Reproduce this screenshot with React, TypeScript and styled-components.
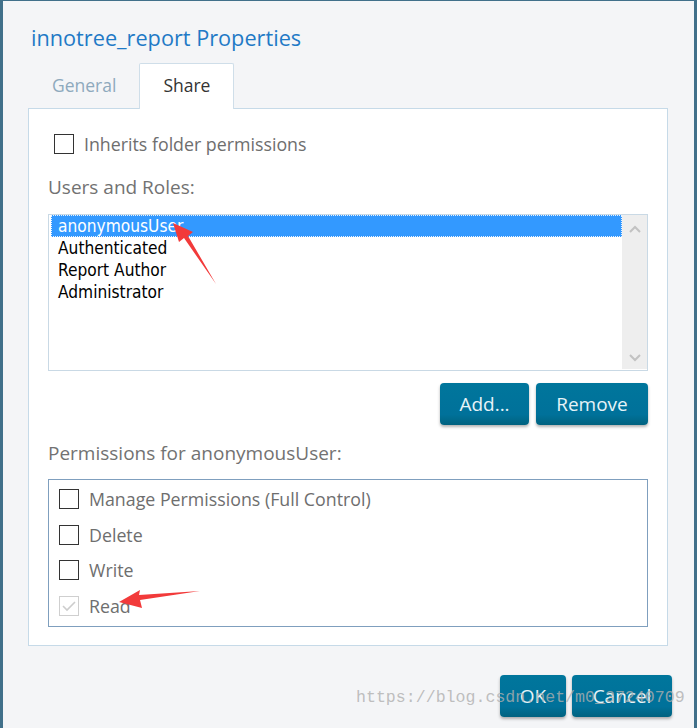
import React from "react";
import styled, { createGlobalStyle } from "styled-components";

const GlobalStyles = createGlobalStyle`
  * {
    box-sizing: border-box;
  }
  html, body {
    margin: 0;
    padding: 0;
    background: #41708a;
    font-family: 'Open Sans', 'Liberation Sans', sans-serif;
  }
`;

const Dialog = styled.div`
  position: relative;
  margin: 1px 3px 0 3px;
  height: 727px;
  background: #f4f5f7;
  padding: 0 26px 0 25px;
  display: flex;
  flex-direction: column;
  overflow: hidden;
`;

const Title = styled.h1`
  margin: 22px 0 0 3px;
  height: 39px;
  font-size: 21.7px;
  font-weight: 400;
  line-height: 29px;
  color: #1f7ac6;
`;

const Tabs = styled.div`
  display: flex;
  align-items: flex-end;
  gap: 2px;
  height: 46px;
  padding-left: 3px;
`;

const Tab = styled.div<{ $active?: boolean }>`
  height: 46px;
  padding: 0 ${(p) => (p.$active ? "23px" : "20px")} 3px;
  display: flex;
  align-items: center;
  font-size: 17.5px;
  color: ${(p) => (p.$active ? "#333" : "#8ea9bd")};
  background: ${(p) => (p.$active ? "#fff" : "transparent")};
  border: 1px solid ${(p) => (p.$active ? "#cfdee9" : "transparent")};
  border-bottom: none;
  border-radius: 2px 2px 0 0;
  margin-bottom: -1px;
  position: relative;
  z-index: 1;
`;

const Panel = styled.div`
  background: #fff;
  border: 1px solid #c6dae8;
  height: 538px;
  padding: 0 19px;
  display: flex;
  flex-direction: column;
`;

const Check = styled.span<{ $disabled?: boolean }>`
  width: 20px;
  height: 20px;
  flex: none;
  border: 1px solid ${(p) => (p.$disabled ? "#cfcfcf" : "#333")};
  background: #fff;
  display: inline-flex;
  align-items: center;
  justify-content: center;
`;

const CheckRow = styled.label<{ $indent?: number }>`
  display: flex;
  align-items: center;
  gap: 10px;
  height: 20px;
  padding-left: ${(p) => p.$indent ?? 0}px;
  font-size: 17.8px;
  color: #6e6e6e;
  white-space: nowrap;
`;

const SectionLabel = styled.div<{ $top: number }>`
  margin-top: ${(p) => p.$top}px;
  height: 24px;
  line-height: 24px;
  font-size: 19px;
  color: #727272;
`;

const ListBox = styled.div`
  margin-top: 15px;
  height: 157px;
  border: 1px solid #c9d9e5;
  display: flex;
  padding: 0 0 1px 2px;
`;

const ListItems = styled.ul`
  flex: 1;
  margin: 0;
  padding: 0;
  list-style: none;
  font-family: 'DejaVu Sans Condensed', 'DejaVu Sans', sans-serif;
  font-size: 17.2px;
  color: #000;
`;

const ListItem = styled.li<{ $selected?: boolean }>`
  height: 22px;
  line-height: 20px;
  padding-left: 6px;
  background: ${(p) => (p.$selected ? "#3399ff" : "transparent")};
  color: ${(p) => (p.$selected ? "#fff" : "#000")};
  border: 1px dotted ${(p) => (p.$selected ? "#e8f2ff" : "transparent")};
`;

const ScrollBar = styled.div`
  width: 25px;
  background: #eeeeee;
  display: flex;
  flex-direction: column;
  justify-content: space-between;
  align-items: center;
  padding: 10px 0 7px;
`;

const ButtonRow = styled.div<{ $top: number }>`
  margin-top: ${(p) => p.$top}px;
  display: flex;
  justify-content: flex-end;
  gap: 7px;
`;

const Button = styled.button<{ $w: number }>`
  width: ${(p) => p.$w}px;
  height: 42px;
  border: none;
  border-radius: 4px;
  background: linear-gradient(#00769c 0%, #00719a 75%, #00627f 100%);
  color: #e6f3f8;
  font-family: 'Open Sans', sans-serif;
  font-size: 19px;
  box-shadow: 0 2px 3px rgba(0, 0, 0, 0.3);
  padding: 0;
`;

const PermBox = styled.div`
  margin-top: 14px;
  height: 148px;
  border: 1px solid #7f9fbe;
  padding: 9px 0 0 10px;
  display: flex;
  flex-direction: column;
  gap: 15.5px;
`;

const Footer = styled.div`
  margin-top: 29px;
  display: flex;
  justify-content: flex-end;
  gap: 6px;
  margin-right: -4px;
`;

const Watermark = styled.div`
  position: absolute;
  left: 353px;
  top: 687px;
  font-family: 'Liberation Mono', monospace;
  font-size: 16.6px;
  color: rgba(175, 175, 175, 0.8);
  pointer-events: none;
  white-space: nowrap;
`;

const Annotation = styled.svg`
  position: absolute;
  left: -3px;
  top: -1px;
  pointer-events: none;
`;

const Chevron = ({ up }: { up?: boolean }) => (
  <svg width="12" height="8" viewBox="0 0 12 8">
    <path
      d={up ? "M1 7 L6 2 L11 7" : "M1 1 L6 6 L11 1"}
      fill="none"
      stroke="#c2c2c2"
      strokeWidth="2"
    />
  </svg>
);

const Tick = () => (
  <svg width="16" height="14" viewBox="0 0 16 14">
    <path d="M2 7 L6 11 L14 3" fill="none" stroke="#cdcdcd" strokeWidth="1.6" />
  </svg>
);

const users = ["anonymousUser", "Authenticated", "Report Author", "Administrator"];
const perms = ["Manage Permissions (Full Control)", "Delete", "Write", "Read"];

export default function App() {
  return (
    <>
      <GlobalStyles />
      <Dialog>
        <Title>innotree_report Properties</Title>
        <Tabs>
          <Tab>General</Tab>
          <Tab $active>Share</Tab>
        </Tabs>
        <Panel>
          <div style={{ height: 25 }} />
          <CheckRow $indent={6}>
            <Check />
            Inherits folder permissions
          </CheckRow>
          <SectionLabel $top={21}>Users and Roles:</SectionLabel>
          <ListBox>
            <ListItems>
              {users.map((u, i) => (
                <ListItem key={u} $selected={i === 0}>
                  {u}
                </ListItem>
              ))}
            </ListItems>
            <ScrollBar>
              <Chevron up />
              <Chevron />
            </ScrollBar>
          </ListBox>
          <ButtonRow $top={12}>
            <Button $w={89}>Add...</Button>
            <Button $w={112}>Remove</Button>
          </ButtonRow>
          <SectionLabel $top={16}>Permissions for anonymousUser:</SectionLabel>
          <PermBox>
            {perms.map((p) => {
              const read = p === "Read";
              return (
                <CheckRow key={p}>
                  <Check $disabled={read}>{read && <Tick />}</Check>
                  {p}
                </CheckRow>
              );
            })}
          </PermBox>
        </Panel>
        <Footer>
          <Button $w={66}>OK</Button>
          <Button $w={100}>Cancel</Button>
        </Footer>
        <Watermark>https://blog.csdn.net/m0_37240709</Watermark>
        <Annotation width="697" height="728" viewBox="0 0 697 728">
          <path d="M173 223 L193 232 L188 236 L216 284 L184 238 L179 242 Z" fill="#f23a3a" />
          <path d="M119 602 L140 590 L139 595 L200 591 L140 600 L142 608 Z" fill="#f23a3a" />
        </Annotation>
      </Dialog>
    </>
  );
}
